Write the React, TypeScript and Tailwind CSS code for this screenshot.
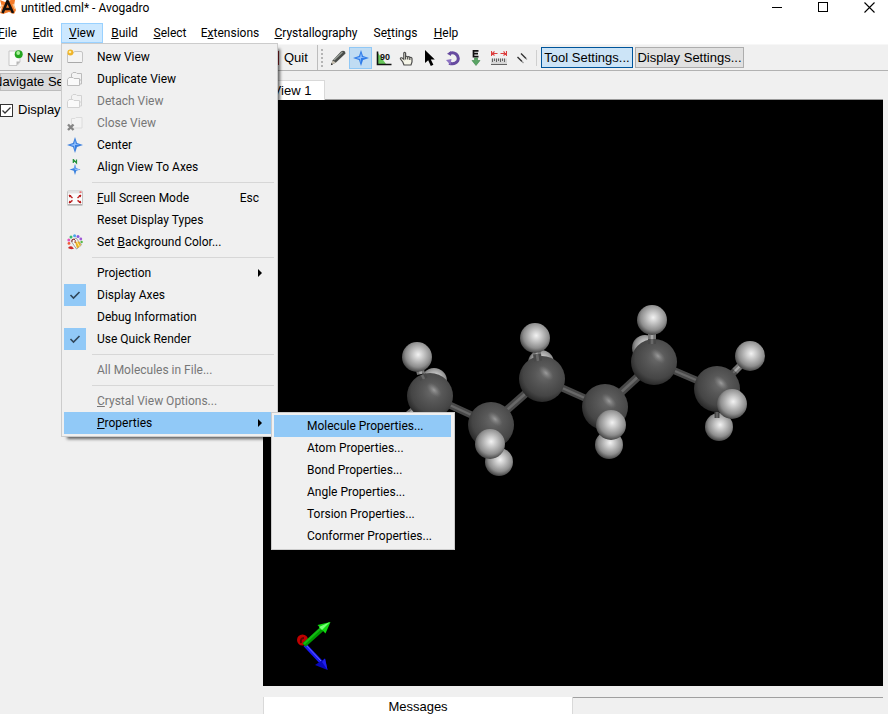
import React from "react";

const uiFont = "font-['Roboto','Noto_Sans',sans-serif]";
const barFont = "font-['Liberation_Sans',Arial,sans-serif]";

type IconProps = { children: React.ReactNode; size?: "sm" | "md" };

function Icon({ children, size = "sm" }: IconProps) {
  return (
    <svg viewBox="0 0 16 16" className={size === "sm" ? "size-4 shrink-0" : "size-[18px] shrink-0"} aria-hidden="true">
      {children}
    </svg>
  );
}

function Star({ bright = false }: { bright?: boolean }) {
  return (
    <>
      <path d="M8 0 L10 6 L16 8 L10 10 L8 16 L6 10 L0 8 L6 6 Z" fill={bright ? "#2f7ce8" : "#3b7fdd"} />
      <path d="M8 3 L8.9 7.1 L13 8 L8 8 L8 13 L7.1 8.9 L3 8 L7.1 7.1 Z" fill="#8fc0ff" />
    </>
  );
}

function NewViewIcon() {
  return (
    <Icon>
      <path d="M0.5 13.5 V4.500 H6 L7.500 2.500 H14 Q15.500 2.500 15.500 4 V12.500 Q15.500 13.500 14.500 13.500 Z" fill="#f4f4f4" stroke="#c4c4c4" />
      <path d="M1 13.5 H15" stroke="#a9a9a9" />
      <circle cx="3.4" cy="3.6" r="3" fill="#f0b429" />
      <circle cx="3" cy="3" r="1.3" fill="#fff0a5" />
    </Icon>
  );
}

function FoldersIcon({ faded = false }: { faded?: boolean }) {
  const stroke = faded ? "#d2d2d2" : "#bcbcbc";
  return (
    <Icon>
      <path d="M4.5 9 V3 L6 1.5 H9 L10 2.5 H14.5 V9 Z" fill="#f3f3f3" stroke={stroke} />
      <path d="M0.5 14.5 V8.5 L2 6.5 H6 L7 7.5 H12.5 V14.5 Z" fill="#fafafa" stroke={stroke} />
      <path d="M12.5 13 H14.5 V8" fill="none" stroke={stroke} />
    </Icon>
  );
}

function CloseViewIcon() {
  return (
    <Icon>
      <path d="M4.5 13 V3.5 H8 L9 2.5 H15 V13 Z" fill="#f3f3f3" stroke="#dcdcdc" />
      <path d="M1 9.5 L6.5 15 M6.5 9.5 L1 15" stroke="#858585" strokeWidth="2.4" />
    </Icon>
  );
}

function AlignIcon() {
  return (
    <Icon>
      <path d="M6.3 4 V0.5 L9.5 4 V0.5" fill="none" stroke="#23923a" strokeWidth="1.2" />
      <path d="M8 5 L9.3 9.3 L13.5 10.5 L9.3 11.7 L8 16 L6.7 11.7 L2.5 10.5 L6.7 9.3 Z" fill="#3b82df" />
      <path d="M8 7 V10.5 H12" fill="none" stroke="#8abaff" />
    </Icon>
  );
}

function FullScreenIcon() {
  return (
    <Icon>
      <rect x="0.5" y="1" width="15" height="13.5" rx="0.6" fill="#fbfbfb" stroke="#c4c4c4" />
      <rect x="1" y="1.4" width="14" height="2" fill="#e2e2e2" />
      <rect x="12.5" y="1.5" width="2" height="1.2" fill="#e44" />
      <path d="M2 5 L5.5 8 M14 5 L10.5 8 M2 13 L5.5 10.3 M14 13 L10.5 10.3" stroke="#bf2525" strokeWidth="1.5" />
      <path d="M2 5 H4.5 L2 7.5 Z M14 5 H11.5 L14 7.5 Z M2 13 V10.5 L4.5 13 Z M14 13 V10.5 L11.5 13 Z" fill="#b51616" />
      <path d="M0.5 15 H15.5" stroke="#9e9e9e" />
    </Icon>
  );
}

function PaintIcon() {
  return (
    <Icon>
      <circle cx="7.6" cy="1.8" r="1.5" fill="#4aa5e8" />
      <circle cx="4" cy="3" r="1.5" fill="#39bb70" />
      <circle cx="1.8" cy="6" r="1.5" fill="#e255bb" />
      <circle cx="2" cy="9.4" r="1.4" fill="#f05c38" />
      <circle cx="11" cy="2.4" r="1.5" fill="#865ae0" />
      <circle cx="13.8" cy="5" r="1.4" fill="#a05ad5" />
      <circle cx="14.6" cy="8" r="1.2" fill="#53ba42" />
      <path d="M4 7 L9 4 L14.5 11 L9.5 15 Z" fill="#f7f7f7" stroke="#8b8b8b" strokeWidth="0.8" />
      <path d="M8 8 L12 7.5 L14 11 L10 14.5 Z" fill="#e9b222" />
      <path d="M10 8 L12.5 12.5" stroke="#fff0a0" />
      <path d="M5 8 Q4 5 7 5 Q9 5.5 8 9" fill="none" stroke="#953328" />
      <path d="M1 14 Q2 11.7 5 12.5 L7 14.8 Q3 15.8 1 14" fill="#cc2929" />
    </Icon>
  );
}

function Separator() {
  return (
    <div role="separator" className="flex h-[9px] items-center pl-7">
      <div className="h-px w-full bg-[#d7d7d7]" />
    </div>
  );
}

type ItemProps = {
  label: React.ReactNode;
  icon?: React.ReactNode;
  disabled?: boolean;
  checked?: boolean;
  shortcut?: string;
  arrow?: boolean;
  active?: boolean;
};

function MenuItem({ label, icon, disabled, checked, shortcut, arrow, active }: ItemProps) {
  return (
    <button
      type="button"
      role="menuitem"
      disabled={disabled}
      className={`flex h-[22px] w-full items-center whitespace-nowrap text-left ${active ? "bg-[#91c9f7]" : ""} ${disabled ? "text-[#777]" : "text-black"}`}
    >
      <span className={`flex size-[22px] shrink-0 items-center justify-center ${checked ? "bg-[#91c9f7]" : ""}`}>
        {checked ? (
          <Icon>
            <path d="M3.5 8 L6.5 11 L12.5 5" fill="none" stroke="#31475a" strokeWidth="1.6" />
          </Icon>
        ) : (
          icon
        )}
      </span>
      <span className="flex-1 pl-[11px]">{label}</span>
      {shortcut && <span className="pr-[15px]">{shortcut}</span>}
      {arrow && (
        <svg viewBox="0 0 4 8" className="mr-3 h-2 w-1" aria-hidden="true">
          <path d="M0 0 L4 4 L0 8 Z" fill="#000" />
        </svg>
      )}
    </button>
  );
}

const properties = [
  "Molecule Properties...",
  "Atom Properties...",
  "Bond Properties...",
  "Angle Properties...",
  "Torsion Properties...",
  "Conformer Properties...",
];

function PropertiesMenu() {
  return (
    <div role="menu" className="absolute left-[207px] top-0 z-30 w-[184px] border border-[#ccc] bg-[#f0f0f0] py-0.5 pl-0.5 pr-[3px]">
      {properties.map((name, i) => (
        <MenuItem key={name} label={name} active={i === 0} />
      ))}
    </div>
  );
}

function ViewMenu() {
  return (
    <div
      role="menu"
      className="absolute -left-px top-[19px] z-20 w-[217px] border border-[#ccc] bg-[#f0f0f0] py-0.5 pl-0.5 pr-[3px] shadow-[4px_4px_3px_-2px_rgba(0,0,0,0.6)]"
    >
      <MenuItem label="New View" icon={<NewViewIcon />} />
      <MenuItem label="Duplicate View" icon={<FoldersIcon />} />
      <MenuItem label="Detach View" icon={<FoldersIcon faded />} disabled />
      <MenuItem label="Close View" icon={<CloseViewIcon />} disabled />
      <MenuItem label="Center" icon={<Icon><Star /></Icon>} />
      <MenuItem label="Align View To Axes" icon={<AlignIcon />} />
      <Separator />
      <MenuItem label={<><u>F</u>ull Screen Mode</>} icon={<FullScreenIcon />} shortcut="Esc" />
      <MenuItem label="Reset Display Types" />
      <MenuItem label={<>Set <u>B</u>ackground Color...</>} icon={<PaintIcon />} />
      <Separator />
      <MenuItem label="Projection" arrow />
      <MenuItem label="Display Axes" checked />
      <MenuItem label="Debug Information" />
      <MenuItem label="Use Quick Render" checked />
      <Separator />
      <MenuItem label="All Molecules in File..." disabled />
      <Separator />
      <MenuItem label={<><u>C</u>rystal View Options...</>} disabled />
      <div className="relative">
        <MenuItem label={<><u>P</u>roperties</>} arrow active />
        <PropertiesMenu />
      </div>
    </div>
  );
}

const menus = [
  { pre: "", key: "F", rest: "ile", width: "w-[35px]" },
  { pre: "", key: "E", rest: "dit", width: "w-[36px]" },
  { pre: "", key: "V", rest: "iew", width: "w-[42px]" },
  { pre: "", key: "B", rest: "uild", width: "w-[43px]" },
  { pre: "", key: "S", rest: "elect", width: "w-[48px]" },
  { pre: "E", key: "x", rest: "tensions", width: "w-[72px]" },
  { pre: "", key: "C", rest: "rystallography", width: "w-[100px]" },
  { pre: "Se", key: "t", rest: "tings", width: "w-[59px]" },
  { pre: "", key: "H", rest: "elp", width: "w-[42px]" },
];

function MenuBar() {
  return (
    <nav className="-ml-2.5 flex h-5 text-xs" aria-label="Main menu">
      {menus.map((m) => {
        const open = m.key === "V";
        return (
          <div key={m.key} className={`relative flex shrink-0 ${m.width} ${open ? "border border-[#99d1ff] bg-[#cce8ff]" : ""}`}>
            <button type="button" className="flex-1 whitespace-nowrap leading-[18px]">
              {m.pre}
              <u>{m.key}</u>
              {m.rest}
            </button>
            {open && <ViewMenu />}
          </div>
        );
      })}
    </nav>
  );
}

function TitleBar() {
  return (
    <header className="flex h-[23px] items-start text-xs">
      <svg viewBox="0 0 16 16" className="size-4 shrink-0" aria-hidden="true">
        <path d="M0 0 L5 2 L11 0 L15 0 L14 6 L16 10 L14 14 L9 12 L3 14 L0 13 L2 7 Z" fill="#f47b2a" />
        <path d="M0 8 L3 5 M13 4 L15 9 M1 12 L5 9" stroke="#ffc082" strokeWidth="1.5" />
        <path d="M2.5 13 L7.5 1 L13 13 M4.5 9 H11" fill="none" stroke="#15100d" strokeWidth="2.6" />
      </svg>
      <h1 className="flex-1 pl-[5px] leading-4">untitled.cml* - Avogadro</h1>
      <div className="-mr-1 flex">
        <button type="button" aria-label="Minimize" className="flex h-[15px] w-[46px] items-center justify-center">
          <svg viewBox="0 0 11 11" className="size-[11px]"><path d="M0 5.5 H10" stroke="#000" /></svg>
        </button>
        <button type="button" aria-label="Maximize" className="flex h-[15px] w-[46px] items-center justify-center">
          <svg viewBox="0 0 11 11" className="size-[11px]"><rect x="0.5" y="0.5" width="9" height="9" fill="none" stroke="#000" /></svg>
        </button>
        <button type="button" aria-label="Close" className="flex h-[15px] w-[46px] items-center justify-center">
          <svg viewBox="0 0 11 11" className="size-[11px]"><path d="M0.5 0.5 L10.5 10.5 M10.5 0.5 L0.5 10.5" stroke="#000" strokeWidth="1.1" /></svg>
        </button>
      </div>
    </header>
  );
}

const tools: { name: string; art: React.ReactNode }[] = [
  {
    name: "Draw",
    art: (
      <>
        <path d="M1 15 L2.5 10.5 L11 1.5 Q13 0 15 1.5 L15.5 3.5 L6 12.5 Z" fill="#4a4d4a" />
        <path d="M4 10 L12.5 2" stroke="#9aa09a" strokeWidth="1.2" />
        <path d="M1 15 L2.5 10.5 L6 12.5 Z" fill="#c9c2b4" />
        <path d="M0.8 15.3 L1.6 13 L3 14.2 Z" fill="#222" />
      </>
    ),
  },
  { name: "Navigate", art: <Star bright /> },
  {
    name: "Bond centric",
    art: (
      <>
        <path d="M2 3 L10 14 H2 Z" fill="#68c85b" />
        <path d="M1.5 1.5 V14.5 H15.5" fill="none" stroke="#111" strokeWidth="1.6" />
        <text x="4" y="10" fontSize="9" fontWeight="bold" fontFamily="Liberation Sans" fill="#111">90</text>
      </>
    ),
  },
  {
    name: "Manipulate",
    art: (
      <path
        d="M5 15 L3.8 12 L1.5 9 Q1 7.5 2.8 7.8 L4.8 9.3 V3 Q5.5 1.6 6.6 3 V7 Q7.5 5.5 8.6 7 Q10 6 10.8 7.6 Q12.6 6.8 13 8.6 V12 L12 15 Z M6.6 7 V9.5 M8.7 7 V9.5 M10.8 7.6 V10"
        fill="#f6f6e8"
        stroke="#4c4c4c"
        strokeWidth="1.2"
      />
    ),
  },
  { name: "Select", art: <path d="M3 0 V13 L6.2 10.2 L8.8 16 L11.4 14.8 L8.8 9.4 H12.8 Z" fill="#000" /> },
  {
    name: "Auto rotate",
    art: (
      <>
        <path d="M4.500 3.6 Q8 1.800 11 4 Q14.500 7 12.600 11 Q10 15 4 13.200" fill="none" stroke="#674ba0" strokeWidth="3" />
        <path d="M2 3.8 L6 1.2 V6 Z" fill="#674ba0" />
        <path d="M1 10 L6.500 9 L5.500 15 Z" fill="#8c72c2" />
      </>
    ),
  },
  {
    name: "Auto optimize",
    art: (
      <>
        <path d="M10.5 0.8 H5.500 V6.6 H10.500 M5.500 3.7 H10" fill="none" stroke="#111" strokeWidth="1.7" />
        <path d="M6.5 8 H9.5 V10.5 H12 L8 15.5 L4 10.5 H6.5 Z" fill="#5aa564" stroke="#3c8549" strokeWidth="0.6" />
      </>
    ),
  },
  {
    name: "Measure",
    art: (
      <>
        <path d="M0.5 1 V6 M15.5 1 V6 M1 3.5 H6.5 M9.5 3.5 H15 M3.5 1.5 L1.2 3.5 L3.5 5.5 M12.5 1.5 L14.8 3.5 L12.5 5.5" fill="none" stroke="#dc3e3e" strokeWidth="1.1" />
        <rect x="0" y="8.5" width="16" height="6" fill="#d6d6d6" />
        <path d="M1.5 8.5 V12 M3.5 8.5 V11 M5.5 8.5 V12 M7.5 8.5 V11 M9.5 8.5 V12 M11.5 8.5 V11 M13.5 8.5 V12 M0 14.5 H16" stroke="#555" strokeWidth="0.9" />
      </>
    ),
  },
  {
    name: "Align",
    art: (
      <>
        <path d="M3.5 7 L8 11.500 M7 3.500 L12 8.500" stroke="#333" strokeWidth="1.4" />
        <path d="M8 11.5 L9.5 13 M12 8.500 L13 9.500" stroke="#999" strokeWidth="1.2" />
      </>
    ),
  },
];

function ToolBar() {
  return (
    <div className={`flex h-[26px] shrink-0 items-center border-b border-[#b2b2b2] bg-[#f0f0f0] text-[13px] ${barFont}`}>
      <button type="button" className="flex w-[277px] shrink-0 items-center gap-1 pl-[7px]">
        <svg viewBox="0 0 16 16" className="size-4 shrink-0" aria-hidden="true">
          <path d="M2 1 H13 V12 L10 15.5 H2 Z" fill="#fafafa" stroke="#c7c7c7" />
          <path d="M13 11.5 H9.5 V15.5 Z" fill="#b6b6b6" />
          <circle cx="11.7" cy="4.2" r="4" fill="#22a51e" />
          <circle cx="11.2" cy="3" r="1.9" fill="#a9f29a" />
        </svg>
        New
      </button>
      <button type="button" className="flex h-full w-[41px] shrink-0 items-center gap-[5px] border-r border-[#bdbdbd]">
        <span className="h-3.5 w-0.5 bg-[#9c2228]" />
        Quit
      </button>
      <div className="ml-[3px] flex w-[5px] shrink-0 flex-col gap-0.5" aria-hidden="true">
        {[0, 1, 2, 3, 4].map((n) => (
          <span key={n} className="size-0.5 bg-[#b5b5b5]" />
        ))}
      </div>
      <div className="flex shrink-0">
        {tools.map((t) => (
          <button
            key={t.name}
            type="button"
            aria-label={t.name}
            className={`flex h-[22px] w-[23px] items-center justify-center border ${t.name === "Navigate" ? "border-[#90c8f6] bg-[#c0dcf3]" : "border-transparent"}`}
          >
            <Icon>{t.art}</Icon>
          </button>
        ))}
      </div>
      <div className="ml-[3px] mr-1 h-4 w-px shrink-0 bg-[#cfcfcf]" />
      <button type="button" className="h-[21px] w-[92px] shrink-0 whitespace-nowrap border border-[#00559b] bg-[#cce4f7]">
        Tool Settings...
      </button>
      <button type="button" className="ml-0.5 h-[21px] w-[109px] shrink-0 whitespace-nowrap border border-[#adadad] bg-[#e1e1e1]">
        Display Settings...
      </button>
    </div>
  );
}

function Dock() {
  return (
    <aside className={`w-[263px] shrink-0 overflow-hidden pt-0.5 text-[13px] ${barFont}`}>
      <h2 className="h-[18px] border border-[#bcbcbc] bg-[#dadada] leading-4">
        <span className="-ml-2">Navigate Settings</span>
      </h2>
      <label className="mt-[11px] flex h-4 items-center gap-[5px]">
        <span className="grid size-[13px]">
          <input
            type="checkbox"
            defaultChecked
            className="peer col-start-1 row-start-1 size-[13px] appearance-none border border-[#333] bg-white"
          />
          <svg viewBox="0 0 13 13" className="pointer-events-none invisible col-start-1 row-start-1 size-[13px] peer-checked:visible" aria-hidden="true">
            <path d="M2.5 6.5 L5 9 L10.500 3.500" fill="none" stroke="#333" strokeWidth="1.3" />
          </svg>
        </span>
        Display
      </label>
    </aside>
  );
}

type Ball = { x: number; y: number; r: number; kind: "c" | "h" };
type Stick = { x1: number; y1: number; x2: number; y2: number; w: number; tone: "dark" | "light" };

const rearSticks: Stick[] = [
  { x1: 430, y1: 396, x2: 408, y2: 415, w: 7, tone: "light" },
  { x1: 430, y1: 396, x2: 491, y2: 424, w: 7, tone: "dark" },
  { x1: 491, y1: 424, x2: 542, y2: 379, w: 8, tone: "dark" },
  { x1: 542, y1: 379, x2: 605, y2: 407, w: 7, tone: "dark" },
  { x1: 605, y1: 407, x2: 654, y2: 362, w: 8, tone: "dark" },
  { x1: 654, y1: 362, x2: 717, y2: 389, w: 7, tone: "dark" },
  { x1: 717, y1: 389, x2: 736, y2: 370, w: 7, tone: "dark" },
  { x1: 735, y1: 371, x2: 750, y2: 356, w: 7, tone: "light" },
];

const rearBalls: Ball[] = [
  { x: 434, y: 381, r: 13, kind: "h" },
  { x: 541, y: 363, r: 13, kind: "h" },
  { x: 645, y: 348, r: 13, kind: "h" },
  { x: 499, y: 462, r: 14, kind: "h" },
  { x: 609, y: 445, r: 14, kind: "h" },
  { x: 719, y: 427, r: 14, kind: "h" },
];

const carbons: Ball[] = [
  { x: 430, y: 396, r: 23, kind: "c" },
  { x: 491, y: 425, r: 23, kind: "c" },
  { x: 542, y: 379, r: 23, kind: "c" },
  { x: 605, y: 407, r: 23, kind: "c" },
  { x: 654, y: 362, r: 23, kind: "c" },
  { x: 717, y: 389, r: 23, kind: "c" },
];

const frontSticks: Stick[] = [
  { x1: 417, y1: 357, x2: 421, y2: 374, w: 8, tone: "light" },
  { x1: 422, y1: 375, x2: 424, y2: 379, w: 8, tone: "dark" },
  { x1: 535, y1: 337, x2: 537, y2: 354, w: 8, tone: "light" },
  { x1: 537, y1: 354, x2: 538, y2: 361, w: 8, tone: "dark" },
  { x1: 652, y1: 319, x2: 652, y2: 339, w: 8, tone: "light" },
  { x1: 652, y1: 339, x2: 652, y2: 344, w: 8, tone: "dark" },
  { x1: 717, y1: 412, x2: 717, y2: 418, w: 5, tone: "dark" },
];

const frontBalls: Ball[] = [
  { x: 417, y: 357, r: 15, kind: "h" },
  { x: 490, y: 444, r: 15, kind: "h" },
  { x: 535, y: 338, r: 15, kind: "h" },
  { x: 611, y: 425, r: 15, kind: "h" },
  { x: 652, y: 320, r: 15, kind: "h" },
  { x: 750, y: 356, r: 15, kind: "h" },
  { x: 732, y: 404, r: 15, kind: "h" },
];

function Balls({ list }: { list: Ball[] }) {
  return (
    <>
      {list.map((b) => (
        <g key={`${b.x}-${b.y}`}>
          <circle cx={b.x} cy={b.y} r={b.r} fill={b.kind === "c" ? "url(#carbon)" : "url(#hydrogen)"} />
          {b.kind === "c" && (
            <ellipse cx={b.x + 4} cy={b.y - 6} rx="9" ry="5" transform={`rotate(45 ${b.x + 4} ${b.y - 6})`} fill="url(#shine)" />
          )}
        </g>
      ))}
    </>
  );
}

function Sticks({ list }: { list: Stick[] }) {
  return (
    <>
      {list.map((s) => (
        <g key={`${s.x1}-${s.y1}-${s.x2}`}>
          <path d={`M${s.x1} ${s.y1} L${s.x2} ${s.y2}`} stroke={s.tone === "dark" ? "#484848" : "#757575"} strokeWidth={s.w} />
          <path d={`M${s.x1} ${s.y1} L${s.x2} ${s.y2}`} stroke={s.tone === "dark" ? "#686868" : "#a8a8a8"} strokeWidth={s.w / 3} />
        </g>
      ))}
    </>
  );
}

function Molecule() {
  return (
    <svg viewBox="263 100 620 586" className="size-full" role="img" aria-label="Hexane molecule">
      <defs>
        <radialGradient id="carbon" cx="0.56" cy="0.4" r="0.62">
          <stop offset="0" stopColor="#6c6c6c" />
          <stop offset="0.35" stopColor="#575757" />
          <stop offset="0.75" stopColor="#454545" />
          <stop offset="1" stopColor="#262626" />
        </radialGradient>
        <radialGradient id="shine">
          <stop offset="0" stopColor="#a8a8a8" stopOpacity="0.8" />
          <stop offset="1" stopColor="#808080" stopOpacity="0" />
        </radialGradient>
        <radialGradient id="hydrogen" cx="0.54" cy="0.42" r="0.6">
          <stop offset="0" stopColor="#f2f2f2" />
          <stop offset="0.3" stopColor="#c8c8c8" />
          <stop offset="0.7" stopColor="#8e8e8e" />
          <stop offset="1" stopColor="#3c3c3c" />
        </radialGradient>
      </defs>
      <Balls list={rearBalls} />
      <Sticks list={rearSticks} />
      <Balls list={carbons} />
      <Sticks list={frontSticks} />
      <Balls list={frontBalls} />
      <g>
        <circle cx="302.5" cy="640" r="5.5" fill="#c00000" />
        <path d="M301 643 Q300 638 304 638" fill="none" stroke="#600000" strokeWidth="2" />
        <path d="M305 645 L321 662" stroke="#1a1af0" strokeWidth="4" />
        <path d="M305 644 L321 661" stroke="#6868ff" strokeWidth="1" />
        <path d="M315 665 L325 658.5 L327.5 670 Z" fill="#0808b8" />
        <path d="M322 662 L325 658.5 L327.5 670 Z" fill="#2020ee" />
        <path d="M304 645 L322 629" stroke="#009800" strokeWidth="5" />
        <path d="M304 644 L321 628" stroke="#13bb13" strokeWidth="2" />
        <path d="M317.5 625 L330.5 622 L325.5 633.5 Z" fill="#10d810" />
        <path d="M319 627 L330 622 L322 630 Z" fill="#78ff78" />
      </g>
    </svg>
  );
}

function Workspace() {
  return (
    <main className={`flex min-w-0 flex-1 flex-col pr-[5px] text-[13px] ${barFont}`}>
      <div className="flex h-[29px] items-end border-b border-[#9b9b9b]">
        <button type="button" className="-mb-px h-5 w-[62px] border border-b-0 border-[#d9d9d9] bg-white pr-1 text-center">
          View 1
        </button>
      </div>
      <div className="min-h-0 flex-1 bg-black">
        <Molecule />
      </div>
      <div className="mt-[11px] flex h-[17px] shrink-0">
        <button type="button" className="w-1/2 border-x border-[#d9d9d9] bg-white">
          Messages
        </button>
        <div className="flex-1 border-t border-[#a0a0a0]" />
      </div>
    </main>
  );
}

export default function App() {
  return (
    <div className={`flex h-screen flex-col overflow-hidden bg-[#f0f0f0] text-black ${uiFont}`}>
      <div className="bg-white pb-px">
        <TitleBar />
        <MenuBar />
      </div>
      <div className="h-px bg-[#f7f7f7]" />
      <ToolBar />
      <div className="flex min-h-0 flex-1">
        <Dock />
        <Workspace />
      </div>
    </div>
  );
}
